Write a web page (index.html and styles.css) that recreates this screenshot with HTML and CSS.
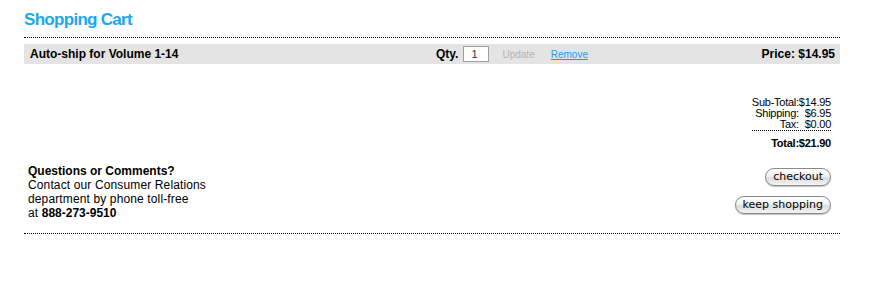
FILE: index.html
```html
<!DOCTYPE html>
<html lang="en">
<head>
  <meta charset="UTF-8">
  <title>Shopping Cart</title>
  <link rel="stylesheet" href="styles.css">
</head>
<body>
  <div class="cart">
    <div class="cart-header">
      <h1>Shopping Cart</h1>
    </div>

    <div class="cart-item">
      <div class="item-name">Auto-ship for Volume 1-14</div>
      <div class="item-qty">
        <label for="qty">Qty.</label>
        <input type="text" id="qty" value="1">
        <span class="update">Update</span>
        <a href="#" class="remove">Remove</a>
      </div>
      <div class="item-price">Price: $14.95</div>
    </div>

    <div class="summary">
      <div class="summary-grid">
        <span class="label">Sub-Total:</span><span class="value">$14.95</span>
        <span class="label">Shipping:</span><span class="value">$6.95</span>
        <span class="label">Tax:</span><span class="value">$0.00</span>
        <span class="total">Total:$21.90</span>
      </div>
    </div>

    <div class="cart-footer">
      <div class="contact">
        <strong>Questions or Comments?</strong><br>
        Contact our Consumer Relations<br>
        department by phone toll-free<br>
        at <strong>888-273-9510</strong>
      </div>
      <div class="actions">
        <button>checkout</button>
        <button>keep shopping</button>
      </div>
    </div>
  </div>
</body>
</html>
```

FILE: styles.css
```css
body {
  margin: 0;
  font-family: "Liberation Sans", Arial, sans-serif;
  color: #000;
  background: #fff;
}
.cart {
  width: 816px;
  margin-left: 24px;
}
.cart-header {
  padding: 10px 0 7px;
  border-bottom: 1px dotted #000;
}
h1 {
  margin: 0;
  font-size: 17px;
  line-height: 20px;
  letter-spacing: -0.7px;
  color: #1aa8ef;
}
.cart-item {
  display: flex;
  align-items: center;
  height: 20px;
  margin-top: 6px;
  padding: 0 5px 0 6px;
  background: #e4e4e4;
  font-size: 12px;
  font-weight: bold;
}
.item-name {
  width: 406px;
}
.item-qty {
  display: flex;
  align-items: center;
}
.item-qty input[type="text"] {
  width: 26px;
  height: 16px;
  box-sizing: border-box;
  margin: 0 0 0 5px;
  padding: 0 0 0 7px;
  border: 1px solid #a0a0a0;
  font-family: inherit;
  font-size: 11px;
  color: #333;
}
.update {
  margin-left: 13px;
  font-size: 10px;
  font-weight: normal;
  color: #b4b4b4;
}
.remove {
  margin-left: 16px;
  font-size: 10px;
  font-weight: normal;
  color: #1a9eea;
}
.item-price {
  margin-left: auto;
}
.summary {
  display: flex;
  justify-content: flex-end;
  padding: 33px 9px 0 0;
}
.summary-grid {
  display: grid;
  grid-template-columns: auto auto;
  font-size: 11px;
  line-height: 11px;
  letter-spacing: -0.25px;
  text-align: right;
}
.total {
  grid-column: 1 / 3;
  margin-top: 0;
  padding-top: 7px;
  border-top: 1px dotted #000;
  font-weight: bold;
}
.cart-footer {
  display: flex;
  justify-content: space-between;
  margin-top: 15px;
  padding: 0 9px 13px 4px;
  border-bottom: 1px dotted #000;
}
.contact {
  font-size: 12px;
  line-height: 14px;
  letter-spacing: 0.13px;
}
.contact strong {
  letter-spacing: 0;
}
.actions {
  display: flex;
  flex-direction: column;
  align-items: flex-end;
  gap: 10px;
  padding-top: 4px;
}
.actions button {
  height: 18px;
  padding: 0 7px;
  border: 1px solid #8a8a8a;
  border-radius: 9px;
  background: linear-gradient(#ffffff 0%, #f2f2f2 45%, #dcdcdc 55%, #f4f4f4 100%);
  box-shadow: 0 1px 1px rgba(0,0,0,0.25);
  font-family: "DejaVu Sans", sans-serif;
  font-size: 11px;
  line-height: 16px;
  color: #000;
  cursor: pointer;
}
```
